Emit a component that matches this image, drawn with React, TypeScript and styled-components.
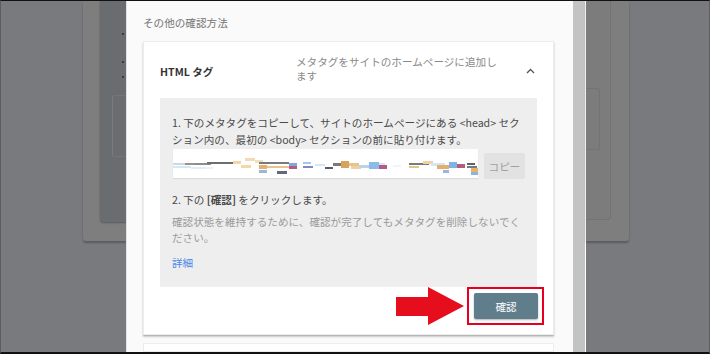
import React from 'react';
import styled, { createGlobalStyle } from 'styled-components';

const GlobalStyle = createGlobalStyle`
  html, body { margin: 0; padding: 0; }
  body {
    width: 710px;
    height: 354px;
    overflow: hidden;
    font-family: "Noto Sans CJK JP", "Liberation Sans", sans-serif;
  }
`;

const Screen = styled.div`
  box-sizing: border-box;
  width: 710px;
  height: 354px;
  display: flex;
  background: #797a7e;
  border-top: 1px solid #111;
  border-bottom: 2px solid #111;
  border-left: 1px solid #5c5d60;
  border-right: 1px solid #5c5d60;
  overflow: hidden;
`;

const Side = styled.div<{ $align: 'left' | 'right' }>`
  display: flex;
  flex-direction: ${(p) => (p.$align === 'left' ? 'row' : 'row-reverse')};
  justify-content: flex-end;
  width: ${(p) => (p.$align === 'left' ? '125px' : '124px')};
  flex-shrink: 0;
`;

const BackPanel = styled.div<{ $align: 'left' | 'right' }>`
  width: 43px;
  height: 240px;
  background: #7e7e7f;
  border-radius: ${(p) => (p.$align === 'left' ? '0 0 0 3px' : '0 0 3px 0')};
  box-shadow: 0 2px 2px rgba(0, 0, 0, 0.25);
  display: flex;
  justify-content: ${(p) => (p.$align === 'left' ? 'flex-end' : 'flex-start')};
`;

const BackInner = styled.div<{ $align: 'left' | 'right' }>`
  box-sizing: border-box;
  width: ${(p) => (p.$align === 'left' ? '26px' : '25px')};
  height: ${(p) => (p.$align === 'left' ? '221px' : '219px')};
  background: ${(p) => (p.$align === 'left' ? '#6a6d70' : '#7c7c7d')};
  border-radius: ${(p) => (p.$align === 'left' ? '0 0 0 4px' : '0 0 4px 0')};
  box-shadow: ${(p) => (p.$align === 'left' ? '0 1px 2px rgba(0,0,0,0.3)' : 'none')};
  border-right: ${(p) => (p.$align === 'right' ? '1px solid #737374' : 'none')};
  border-bottom: ${(p) => (p.$align === 'right' ? '1px solid #737374' : 'none')};
  display: flex;
  flex-direction: column;
  align-items: ${(p) => (p.$align === 'left' ? 'flex-end' : 'flex-start')};
  padding-top: ${(p) => (p.$align === 'left' ? '0' : '87px')};
`;

const Dot = styled.span<{ $top: number }>`
  width: 2px;
  height: 2px;
  border-radius: 50%;
  background: #2b2b2b;
  margin-top: ${(p) => p.$top}px;
  margin-right: 2px;
`;

const BackBox = styled.div<{ $align: 'left' | 'right'; $top: number; $h: number }>`
  box-sizing: border-box;
  width: 14px;
  height: ${(p) => p.$h}px;
  margin-top: ${(p) => p.$top}px;
  border: 1px solid #737475;
  border-right: ${(p) => (p.$align === 'left' ? 'none' : '1px solid #727374')};
  border-left: ${(p) => (p.$align === 'left' ? '1px solid #7a7b7c' : 'none')};
  border-radius: ${(p) => (p.$align === 'left' ? '3px 0 0 3px' : '0 3px 3px 0')};
`;

const Modal = styled.div`
  display: flex;
  width: 459px;
  flex-shrink: 0;
  background: #fafafa;
  border-left: 1px solid #e2e2e2;
`;

const ModalBody = styled.div`
  flex: 1;
  padding: 14px 19px 0 16px;
  display: flex;
  flex-direction: column;
`;

const ScrollTrack = styled.div`
  width: 12px;
  background: #c3c3c3;
  border-right: 1px solid #fff;
`;

const SectionTitle = styled.div`
  font-size: 10.6px;
  line-height: 16px;
  color: #757575;
  margin-bottom: 10px;
`;

const Card = styled.div`
  background: #fff;
  box-shadow: 0 1px 1px rgba(0, 0, 0, 0.12), 0 2px 2px rgba(0, 0, 0, 0.18);
  border: 1px solid #ececec;
  display: flex;
  flex-direction: column;
`;

const NextCard = styled(Card)`
  margin-top: 8px;
  height: 20px;
  box-shadow: none;
`;

const CardHeader = styled.div`
  height: 56px;
  display: flex;
  align-items: center;
  padding: 0 16px;
`;

const MethodName = styled.div`
  width: 136px;
  font-size: 10.6px;
  font-weight: 700;
  color: #333;
  padding-top: 2px;
`;

const MethodDesc = styled.div`
  width: 212px;
  font-size: 10.6px;
  line-height: 14px;
  color: #8a8a8a;
  margin-top: -3px;
  white-space: nowrap;
`;

const Chevron = styled.div`
  margin-left: auto;
  margin-right: 2px;
  display: flex;
  padding-top: 2px;
`;

const Instructions = styled.div`
  margin: 0 16px;
  background: #eeeeee;
  padding: 16px 4px 16px 12px;
  display: flex;
  flex-direction: column;
`;

const Step = styled.div<{ $top?: number }>`
  font-size: 10.6px;
  line-height: 17px;
  color: #4a4a4a;
  margin-top: ${(p) => p.$top ?? 0}px;
  white-space: nowrap;
`;

const Note = styled.div`
  font-size: 10.6px;
  line-height: 16px;
  color: #9a9a9a;
  margin-top: 6px;
  white-space: nowrap;
`;

const MoreLink = styled.a`
  font-size: 10.6px;
  line-height: 16px;
  color: #4a88e8;
  text-decoration: none;
  margin-top: 9px;
`;

const CodeRow = styled.div`
  display: flex;
  align-items: flex-end;
  gap: 6px;
  margin-top: 1px;
  padding-left: 1px;
`;

const CodeBox = styled.div`
  width: 305px;
  height: 29px;
  background: #fff;
  box-shadow: 0 1px 1px rgba(0, 0, 0, 0.08);
  display: flex;
`;

const CopyButton = styled.button`
  width: 41px;
  height: 26px;
  border: none;
  border-radius: 2px;
  background: #e2e2e2;
  color: #a0a0a0;
  font-family: inherit;
  font-size: 10.6px;
  padding: 0;
  margin-bottom: -1px;
`;

const CardFooter = styled.div`
  height: 47px;
  display: flex;
  justify-content: flex-end;
  align-items: flex-start;
  gap: 3px;
  padding-right: 9px;
`;

const Highlight = styled.div`
  box-sizing: border-box;
  width: 77px;
  height: 38px;
  border: 2px solid #e6001d;
  display: flex;
  align-items: center;
  justify-content: center;
  padding-left: 1px;
`;

const ConfirmButton = styled.button`
  width: 64px;
  height: 26px;
  border: none;
  border-radius: 2px;
  background: #607d8b;
  color: #fff;
  font-family: inherit;
  font-size: 10.6px;
  box-shadow: 0 1px 2px rgba(0, 0, 0, 0.3);
`;

// pixelated meta tag (blurred in the screenshot)
const mosaic: [number, number, number, number, string][] = [
  [0, 14, 12, 2, '#c9d9ea'], [12, 14, 10, 2, '#a58f7e'], [22, 14, 16, 2, '#8d8d8d'], [0, 17, 18, 2, '#cfe9f7'],
  [18, 18, 14, 2, '#dfeff8'], [32, 18, 8, 2, '#e8f3f9'], [34, 13, 26, 2, '#6e6e6e'], [60, 12, 8, 3, '#f1d7a8'],
  [68, 16, 10, 3, '#f3d7a6'], [72, 9, 10, 3, '#f4d9b2'], [82, 11, 8, 3, '#f2dfbd'], [86, 13, 30, 2, '#7a7a7a'],
  [86, 16, 8, 4, '#e3b16d'], [94, 17, 22, 2, '#e9c38e'], [86, 21, 8, 3, '#9ab6d8'], [104, 22, 10, 3, '#5e6b78'],
  [116, 14, 8, 3, '#7fa9dc'], [116, 17, 8, 3, '#b35b86'], [130, 13, 8, 2, '#9fc9ee'], [130, 17, 10, 2, '#8a84bf'],
  [142, 15, 10, 2, '#cfe7f6'], [152, 18, 8, 2, '#595c66'], [160, 14, 8, 3, '#7a7a7a'], [168, 12, 8, 7, '#d8a35a'],
  [176, 14, 10, 3, '#e6c48e'], [178, 17, 10, 3, '#f0cfa0'], [186, 16, 10, 3, '#b9d3ec'], [196, 13, 10, 7, '#8dbbe8'],
  [206, 16, 8, 4, '#b35b86'], [206, 14, 6, 2, '#cfe7f6'], [220, 16, 8, 2, '#eef6fa'], [236, 14, 20, 2, '#7a7a7a'],
  [236, 17, 10, 2, '#e7c28a'], [250, 12, 10, 3, '#f0d3a5'], [258, 14, 14, 3, '#cfe7f6'], [264, 16, 12, 4, '#e0b06c'],
  [270, 21, 6, 3, '#9ab6d8'], [276, 13, 8, 6, '#7fb3e6'], [284, 15, 8, 4, '#b35b86'], [294, 14, 8, 2, '#5e6468'],
  [294, 17, 10, 2, '#7a7a7a'], [298, 19, 7, 4, '#e4b36e'], [298, 23, 7, 3, '#8fb2db'],
];

const ChevronUp = () => (
  <svg width="9" height="6" viewBox="0 0 9 6">
    <path d="M1 5 L4.5 1.5 L8 5" fill="none" stroke="#555" strokeWidth="1.3" />
  </svg>
);

const RedArrow = () => (
  <svg width="68" height="38" viewBox="0 0 68 38">
    <path d="M0 10 H32 V0 L68 19 L32 38 V29 H0 Z" fill="#e60d1d" />
  </svg>
);

const BackSide = ({ align }: { align: 'left' | 'right' }) => (
  <Side $align={align}>
    <BackPanel $align={align}>
      <BackInner $align={align}>
        {align === 'left' ? (
          <>
            <Dot $top={32} />
            <Dot $top={26} />
            <Dot $top={13} />
            <BackBox $align="left" $top={17} $h={62} />
          </>
        ) : (
          <BackBox $align="right" $top={0} $h={62} />
        )}
      </BackInner>
    </BackPanel>
  </Side>
);

export default function App() {
  return (
    <>
      <GlobalStyle />
      <Screen>
        <BackSide align="left" />
        <Modal>
          <ModalBody>
            <SectionTitle>その他の確認方法</SectionTitle>
            <Card>
              <CardHeader>
                <MethodName>HTML タグ</MethodName>
                <MethodDesc>
                  メタタグをサイトのホームページに追加し
                  <br />
                  ます
                </MethodDesc>
                <Chevron>
                  <ChevronUp />
                </Chevron>
              </CardHeader>
              <Instructions>
                <Step>
                  1. 下のメタタグをコピーして、サイトのホームページにある &lt;head&gt; セク
                  <br />
                  ション内の、最初の &lt;body&gt; セクションの前に貼り付けます。
                </Step>
                <CodeRow>
                  <CodeBox>
                    <svg width="305" height="29" viewBox="0 0 305 29">
                      {mosaic.map(([x, y, w, h, c], i) => (
                        <rect key={i} x={x} y={y} width={w} height={h} fill={c} />
                      ))}
                    </svg>
                  </CodeBox>
                  <CopyButton>コピー</CopyButton>
                </CodeRow>
                <Step $top={13}>
                  2. 下の <b>[確認]</b> をクリックします。
                </Step>
                <Note>
                  確認状態を維持するために、確認が完了してもメタタグを削除しないでく
                  <br />
                  ださい。
                </Note>
                <MoreLink href="#">詳細</MoreLink>
              </Instructions>
              <CardFooter>
                <RedArrow />
                <Highlight>
                  <ConfirmButton>確認</ConfirmButton>
                </Highlight>
              </CardFooter>
            </Card>
            <NextCard />
          </ModalBody>
          <ScrollTrack />
        </Modal>
        <BackSide align="right" />
      </Screen>
    </>
  );
}
